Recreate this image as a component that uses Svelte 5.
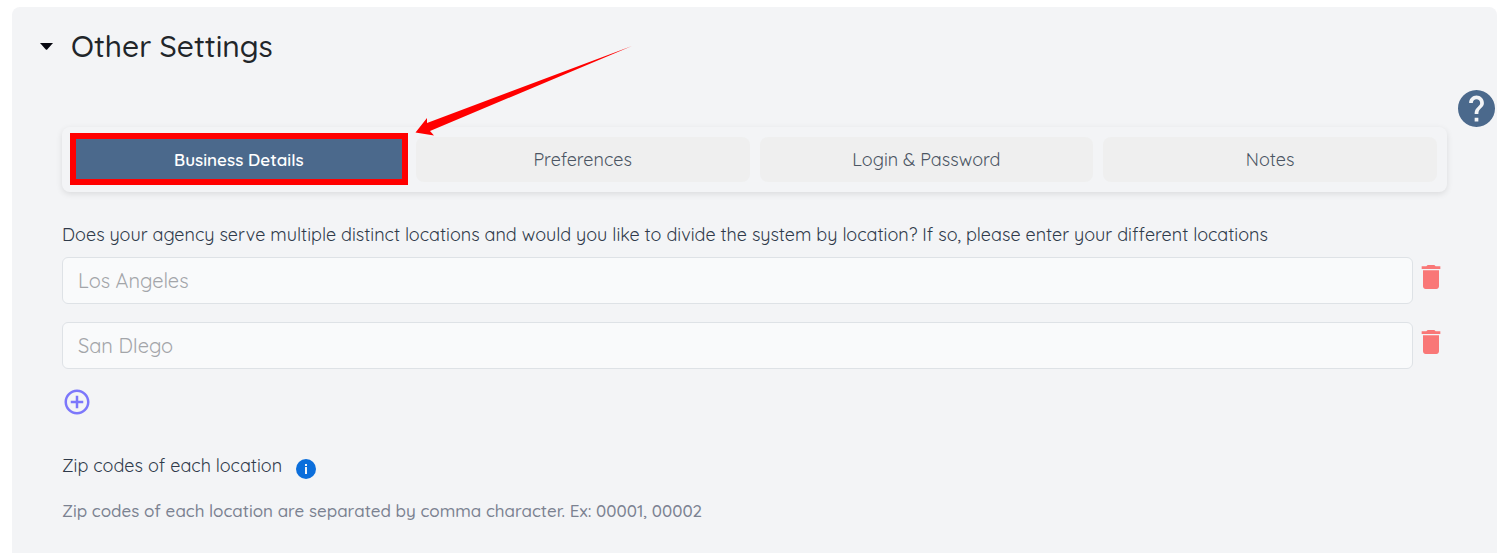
<script lang="ts">
  interface Location {
    id: number;
    name: string;
    placeholder: string;
  }

  const tabs = ['Business Details', 'Preferences', 'Login & Password', 'Notes'];
  let activeTab = $state('Business Details');

  let nextId = 3;
  let locations: Location[] = $state([
    { id: 1, name: '', placeholder: 'Los Angeles' },
    { id: 2, name: '', placeholder: 'San DIego' },
  ]);

  function addLocation() {
    locations.push({ id: nextId++, name: '', placeholder: 'Location' });
  }

  function removeLocation(id: number) {
    locations = locations.filter((location) => location.id !== id);
  }
</script>

<main class="page">
  <details class="panel" open>
    <summary class="panel-header">
      <svg class="caret" viewBox="0 0 13 7" aria-hidden="true">
        <path d="M0 0h13L7.2 6.5q-.7.6-1.4 0z" fill="#05060f" />
      </svg>
      <h1>Other Settings</h1>
    </summary>

    <div class="help-row">
      <button class="icon-button help" aria-label="Help">
        <svg viewBox="2 2 20 20" aria-hidden="true">
          <circle cx="12" cy="12" r="9" fill="#f3f4f6" />
          <path
            fill="#4b698c"
            d="M12 2C6.48 2 2 6.48 2 12s4.48 10 10 10 10-4.48 10-10S17.52 2 12 2zm1 17h-2v-2h2v2zm2.07-7.75l-.9.92C13.45 12.9 13 13.5 13 15h-2v-.5c0-1.1.45-2.1 1.17-2.83l1.24-1.26c.37-.36.59-.86.59-1.41 0-1.1-.9-2-2-2s-2 .9-2 2H8c0-2.21 1.79-4 4-4s4 1.79 4 4c0 .88-.36 1.68-.93 2.25z"
          />
        </svg>
      </button>
    </div>

    <div class="content">
      <div class="tabs" role="tablist">
        {#each tabs as tab, i}
          <div class="tab-slot">
            <button
              class="tab"
              class:active={activeTab === tab}
              role="tab"
              aria-selected={activeTab === tab}
              onclick={() => (activeTab = tab)}
            >
              {tab}
            </button>
            {#if i === 0}
              <span class="highlight"></span>
              <svg class="arrow" viewBox="0 0 216 90" aria-hidden="true">
                <path d="M-.5 85.500L11 71L11 76L216 -1L14 84L18 88.500Z" fill="#ff0000" />
              </svg>
            {/if}
          </div>
        {/each}
      </div>

      <p class="question" id="locations-label">
        Does your agency serve multiple distinct locations and would you like to divide the system by location? If so, please enter your different locations
      </p>

      <div class="locations">
        {#each locations as location (location.id)}
          <div class="location">
            <input
              type="text"
              aria-labelledby="locations-label"
              placeholder={location.placeholder}
              bind:value={location.name}
            />
            <button class="icon-button remove" aria-label="Remove location" onclick={() => removeLocation(location.id)}>
              <svg viewBox="0 0 24 24" aria-hidden="true">
                <path fill="#f97777" d="M6 19c0 1.100.9 2 2 2h8c1.100 0 2-.9 2-2V7H6v12zM19 4h-3.500l-1-1h-5l-1 1H5v2h14V4z" />
              </svg>
            </button>
          </div>
        {/each}
      </div>

      <button class="icon-button add" aria-label="Add location" onclick={addLocation}>
        <svg viewBox="0 0 24 24" aria-hidden="true">
          <path
            fill="#7c77fb"
            d="M13 7h-2v4H7v2h4v4h2v-4h4v-2h-4V7zm-1-5C6.480 2 2 6.480 2 12s4.480 10 10 10 10-4.480 10-10S17.520 2 12 2zm0 18c-4.410 0-8-3.590-8-8s3.590-8 8-8 8 3.590 8 8-3.590 8-8 8z"
          />
        </svg>
      </button>

      <div class="zip-row">
        <span>Zip codes of each location</span>
        <button class="icon-button info" aria-label="About zip codes">
          <svg viewBox="0 0 20 20" aria-hidden="true">
            <circle cx="10" cy="10" r="10" fill="#0b6edb" />
            <path d="M9 5h2v2H9zM9 8h2v7H9z" fill="#f3f4f6" />
          </svg>
        </button>
      </div>
      <p class="hint">Zip codes of each location are separated by comma character. Ex: 00001, 00002</p>
    </div>
  </details>
</main>

<style>
:global(body) {
  margin: 0;
  background-color: #ffffff;
}

.page {
  box-sizing: border-box;
  display: flex;
  flex-direction: column;
  min-height: 100vh;
  padding: 7px 11px 0 12px;
  font-family: Quicksand, Lato, sans-serif;
  font-size: 18px;
  line-height: 24px;
  color: #2f3a4a;
}

.panel {
  flex: 1;
  background-color: #f3f4f6;
  border-radius: 8px 8px 0 0;
}

.panel-header {
  display: flex;
  align-items: center;
  gap: 18px;
  padding: 19px 28px 21px;
  list-style: none;
  cursor: pointer;
}

.caret {
  width: 13px;
  height: 7px;
}

h1 {
  margin: 0;
  font-size: 30px;
  font-weight: 500;
  line-height: 40px;
  color: #212529;
}

.icon-button {
  display: block;
  flex: none;
  padding: 0;
  border: none;
  background: none;
  cursor: pointer;
}

.icon-button svg {
  display: block;
  width: 100%;
}

.help-row {
  display: flex;
  justify-content: flex-end;
  padding: 3px 2px 0 0;
}

.help {
  width: 37px;
}

.content {
  padding: 0 50px 30px;
}

.tabs {
  display: flex;
  gap: 10px;
  padding: 10px;
  border-radius: 8px;
  box-shadow: 0 2px 6px rgba(0, 0, 0, 0.1);
}

.tab-slot {
  position: relative;
  flex: 1;
}

.tab {
  width: 100%;
  height: 45px;
  border: none;
  border-radius: 8px;
  background-color: #efefef;
  font-family: inherit;
  font-size: 18px;
  color: #4b5563;
  cursor: pointer;
}

.tab.active {
  background-color: #4b698c;
  color: #ffffff;
  font-size: 17px;
  font-weight: 600;
}

/* callout drawn over the first tab */
.highlight {
  position: absolute;
  inset: -4px -2px -3px;
  border: 6px solid #ff0000;
  pointer-events: none;
}

.arrow {
  position: absolute;
  left: 100%;
  bottom: 100%;
  width: 216px;
  height: 90px;
  margin-left: 10px;
  overflow: visible;
  pointer-events: none;
}

.question {
  margin: 31px 0 10px;
}

.locations {
  display: flex;
  flex-direction: column;
  gap: 18px;
}

.location {
  display: flex;
  align-items: flex-start;
  gap: 2px;
}

input {
  box-sizing: border-box;
  flex: 1;
  min-width: 0;
  height: 47px;
  padding: 0 15px;
  border: 1px solid #dee2e6;
  border-radius: 6px;
  background-color: #f9fafb;
  font-family: inherit;
  font-size: 20px;
  color: #374151;
}

input::placeholder {
  color: #a3a5a9;
}

.remove {
  width: 32px;
  margin-top: 4px;
}

.add {
  width: 30px;
  margin-top: 18px;
}

.zip-row {
  display: flex;
  align-items: center;
  gap: 14px;
  margin-top: 36px;
}

.info {
  width: 20px;
  margin-top: 6px;
}

.hint {
  margin: 20px 0 0;
  font-size: 17px;
  font-weight: 500;
  color: #7b8291;
}
</style>
